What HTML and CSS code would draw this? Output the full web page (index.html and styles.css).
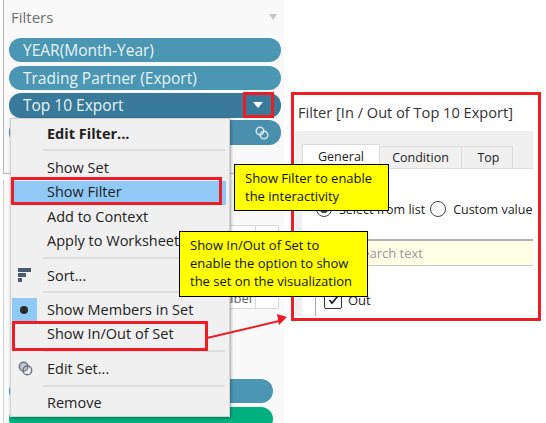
FILE: index.html
```html
<!DOCTYPE html>
<html lang="en">
<head>
  <meta charset="utf-8">
  <title>Show In/Out of Set</title>
  <link rel="stylesheet" href="styles.css">
</head>
<body>
  <div class="stage">

    <!-- left shelf -->
    <div class="side">
      <section class="filters">
        <div class="filters-head">
          <span>Filters</span>
          <span class="head-caret"></span>
        </div>
        <div class="pill">YEAR(Month-Year)</div>
        <div class="pill">Trading Partner (Export)</div>
        <div class="pill pill-active">Top 10 Export<span class="pill-caret"></span></div>
        <div class="pill pill-set">
          <svg class="set-icon" width="14" height="14" viewBox="0 0 14 14"><circle cx="5" cy="5" r="3.8"/><circle cx="9" cy="9" r="3.8"/></svg>
        </div>
      </section>
      <section class="marks">
        <div class="label-box"><span class="label-cell">Label</span><span class="label-cell"></span></div>
        <div class="pill pill-low"></div>
        <div class="pill pill-green"></div>
      </section>
    </div>

    <!-- filter dialog -->
    <div class="dialog">
      <h2 class="dialog-title">Filter [In / Out of Top 10 Export]</h2>
      <div class="dialog-body">
        <div class="tabs">
          <span class="tab tab-on">General</span>
          <span class="tab tab-cond">Condition</span>
          <span class="tab tab-top">Top</span>
        </div>
        <div class="tab-page">
          <div class="radios">
            <span class="radio radio-on"></span>
            <span class="radio-text">Select from list</span>
            <span class="radio"></span>
            <span class="radio-text">Custom value</span>
          </div>
          <div class="search">Search text</div>
          <div class="list">
            <span class="check">
              <svg width="11" height="10" viewBox="0 0 11 10"><path d="M1.5 5 L4 8 L9.5 1.5" fill="none" stroke="#222" stroke-width="1.8"/></svg>
            </span>
            <span>Out</span>
          </div>
        </div>
      </div>
    </div>

    <!-- context menu -->
    <div class="menu">
      <div class="item item-bold">Edit Filter...</div>
      <div class="sep"></div>
      <div class="item">Show Set</div>
      <div class="item item-hover">Show Filter</div>
      <div class="item">Add to Context</div>
      <div class="item">Apply to Worksheets</div>
      <div class="sep"></div>
      <div class="item">
        <svg class="item-icon" width="14" height="14" viewBox="0 0 14 14" fill="#4b5a70"><rect x="0" y="0" width="13" height="4"/><rect x="0" y="5" width="8" height="4"/><rect x="0" y="10" width="4" height="4"/></svg>
        Sort...
      </div>
      <div class="sep"></div>
      <div class="item"><span class="bullet"></span>Show Members in Set</div>
      <div class="item">Show In/Out of Set</div>
      <div class="sep"></div>
      <div class="item">
        <svg class="item-icon" width="15" height="15" viewBox="0 0 16 16" fill="none" stroke="#6b7480" stroke-width="1.5"><circle cx="6" cy="6" r="4.6" fill="#c3c7cc"/><circle cx="10" cy="10" r="4.6"/></svg>
        Edit Set...
      </div>
      <div class="sep"></div>
      <div class="item">Remove</div>
    </div>

    <!-- annotations -->
    <div class="mark mark-caret"></div>
    <div class="mark mark-filter"></div>
    <div class="mark mark-inout"></div>
    <div class="mark mark-dialog"></div>
    <div class="note note-filter">Show Filter to enable<br>the interactivity</div>
    <div class="note note-set">Show In/Out of Set to<br>enable the option to show<br>the set on the visualization</div>
    <svg class="arrow" width="90" height="30" viewBox="0 0 90 30">
      <line x1="1" y1="27" x2="73" y2="10" stroke="#ee1c25" stroke-width="2"/>
      <polygon points="81,6 71,3 73,14" fill="#ee1c25"/>
    </svg>
  </div>
</body>
</html>
```

FILE: styles.css
```css
* {
  box-sizing: border-box;
}

body {
  margin: 0;
  background: #fff;
  font-family: "Open Sans", "Noto Sans", sans-serif;
  color: #222;
}

.stage {
  position: relative;
  display: flex;
  width: 546px;
  height: 423px;
  overflow: hidden;
}

/* left shelf */
.side {
  width: 281px;
  margin-left: 3px;
  flex: none;
}

.filters {
  height: 174px;
  padding: 0 3px 0 5px;
  background: #f9f9f9;
  border-left: 1px solid #b5b5b5;
  border-bottom: 1px solid #b5b5b5;
}

.filters-head {
  display: flex;
  align-items: center;
  justify-content: space-between;
  height: 38px;
  padding: 0 4px 4px 2px;
  font-size: 15px;
  color: #6d6d6d;
}

.head-caret {
  border-top: 6px solid #c4c4c4;
  border-left: 4px solid transparent;
  border-right: 4px solid transparent;
}

.pill {
  display: flex;
  align-items: center;
  justify-content: space-between;
  height: 24px;
  margin-bottom: 3.5px;
  padding: 0 12px 0 14px;
  border-radius: 12px;
  background: #4a96b3;
  color: #e9f3f7;
  font-size: 15.5px;
}

.pill-active {
  height: 25px;
  padding-bottom: 1px;
  background: #397a9a;
  margin-bottom: 2px;
}

.pill-caret {
  margin-right: 6px;
  border-top: 6px solid #fff;
  border-left: 5px solid transparent;
  border-right: 5px solid transparent;
}

.pill-set {
  height: 25px;
  justify-content: flex-end;
  background: #4a90ae;
}

.set-icon {
  fill: none;
  stroke: #d5e6ee;
  stroke-width: 1.5;
}

.marks {
  height: 249px;
  margin-top: 6px;
  padding: 45px 11px 0 5px;
  background: #f9f9f9;
  border-left: 1px solid #d0d0d0;
}

.label-box {
  display: flex;
  width: 79px;
  height: 84px;
  margin: 0 0 70px 191px;
  background: #fff;
  border: 1px solid #d8d8d8;
  border-radius: 2px;
  font-size: 13px;
  color: #666;
}

.label-cell {
  display: flex;
  flex: 1;
  align-items: flex-end;
  justify-content: flex-end;
  padding: 0 3px 1px 0;
}

.label-cell + .label-cell {
  flex: none;
  width: 23px;
  border-left: 1px solid #d8d8d8;
}

.pill-low {
  margin-bottom: 4px;
}

.pill-green {
  background: #00b17f;
}

/* filter dialog */
.dialog {
  width: 238px;
  margin-left: 11px;
  padding-top: 100px;
  flex: none;
}

.dialog-title {
  height: 31px;
  margin: 0 0 0 3px;
  font-size: 14.6px;
  font-weight: 400;
  line-height: 24px;
  color: #333;
  white-space: nowrap;
}

.dialog-body {
  height: 185px;
  padding: 13px 0 0 7px;
  background: #f0f0f0;
}

.tabs {
  display: flex;
  height: 24px;
  font-size: 12.5px;
}

.tab {
  display: flex;
  align-items: center;
  justify-content: center;
  margin-top: 2px;
  background: #f0f0f0;
  border: 1px solid #dcdcdc;
  border-left: 0;
  border-bottom: 0;
}

.tab-on {
  width: 78px;
  margin-top: 0;
  background: #fff;
  border-left: 1px solid #dcdcdc;
}

.tab-cond {
  width: 82px;
}

.tab-top {
  width: 51px;
  padding-left: 3px;
}

.tab-page {
  height: 149px;
  padding: 28px 0 0 14px;
  background: #fff;
  border-top: 1px solid #dcdcdc;
}

.radios {
  display: flex;
  align-items: center;
  height: 24px;
  font-size: 12.5px;
  white-space: nowrap;
}

.radio {
  width: 16px;
  height: 16px;
  margin-right: 7px;
  flex: none;
  background: #fff;
  border: 1px solid #444;
  border-radius: 50%;
}

.radio-on {
  background: radial-gradient(circle, #444 0 4px, #fff 4.5px);
}

.radio-text {
  margin-right: 5px;
}

.search {
  height: 27px;
  margin: 18px 0 0 -14px;
  padding-left: 53px;
  background: #ffffe6;
  border-top: 2px solid #b0b0b0;
  border-bottom: 1px solid #c8c8c8;
  font-size: 13px;
  line-height: 24px;
  color: #999;
}

.list {
  display: flex;
  align-items: flex-end;
  gap: 6px;
  height: 50px;
  margin-left: -1px;
  padding: 0 0 7px 8px;
  border-left: 1px solid #a8a8a8;
  font-size: 13px;
}

.check {
  display: flex;
  align-items: center;
  justify-content: center;
  width: 18px;
  height: 18px;
  background: #fff;
  border: 1px solid #333;
  border-radius: 2px;
}

/* context menu */
.menu {
  position: absolute;
  left: 10px;
  top: 118px;
  width: 220px;
  height: 299px;
  padding: 3px 0 2px 1px;
  background: #f0f0f0;
  border: 1px solid #d0d0d0;
  box-shadow: 1px 1px 3px rgba(0, 0, 0, 0.35);
  font-size: 14.5px;
  color: #222;
}

.item {
  position: relative;
  display: flex;
  align-items: center;
  height: 24.4px;
  padding: 0 0 2px 35px;
  white-space: nowrap;
}

.item-bold {
  font-weight: 700;
}

.item-hover {
  width: 214px;
  background: #90c8f6;
}

.item-icon {
  position: absolute;
  left: 6px;
  top: 4px;
}

.bullet {
  position: absolute;
  left: 0;
  top: 0;
  width: 25px;
  height: 24px;
  background: #90c8f6;
}

.bullet::after {
  content: "";
  position: absolute;
  left: 8px;
  top: 8px;
  width: 8px;
  height: 8px;
  background: #2b2b2b;
  border-radius: 50%;
}

.sep {
  height: 2px;
  margin: 3px 4px 5px 31px;
  background: #dedede;
}

/* annotations */
.mark {
  position: absolute;
  border: 3px solid #ee1c25;
}

.mark-caret {
  left: 243px;
  top: 92px;
  width: 31px;
  height: 26px;
}

.mark-filter {
  left: 11px;
  top: 177px;
  width: 211px;
  height: 28px;
}

.mark-inout {
  left: 12px;
  top: 321px;
  width: 196px;
  height: 30px;
}

.mark-dialog {
  left: 291px;
  top: 92px;
  width: 250px;
  height: 229px;
}

.note {
  position: absolute;
  padding: 4px 0 0 10px;
  background: #ffff00;
  border: 1px solid #000;
  font-size: 13px;
  line-height: 18px;
  color: #111;
  white-space: nowrap;
}

.note-filter {
  left: 234px;
  top: 164px;
  width: 155px;
  height: 47px;
}

.note-set {
  left: 179px;
  top: 231px;
  width: 189px;
  height: 66px;
}

.arrow {
  position: absolute;
  left: 206px;
  top: 311px;
}
```
